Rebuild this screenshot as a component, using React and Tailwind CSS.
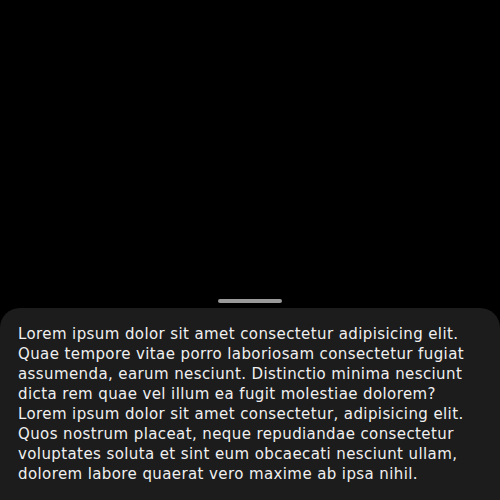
export default function App() {
  return (
    <div className="w-[500px] h-[500px] bg-black flex flex-col justify-end overflow-hidden">
      <div className="flex justify-center pb-[5px]">
        <div className="w-16 h-1 rounded-full bg-[#9a9a9a]" />
      </div>
      <div className="bg-[#1c1c1c] rounded-t-[20px] px-[18px] pt-4 pb-4">
        <p
          className="text-[15px] leading-5 tracking-[0.4px] text-[#f0f0f0]"
          style={{ fontFamily: '"DejaVu Sans", sans-serif' }}
        >
          Lorem ipsum dolor sit amet consectetur adipisicing elit. Quae tempore vitae porro laboriosam
          consectetur fugiat assumenda, earum nesciunt. Distinctio minima nesciunt dicta rem quae vel
          illum ea fugit molestiae dolorem? Lorem ipsum dolor sit amet consectetur, adipisicing elit.
          Quos nostrum placeat, neque repudiandae consectetur voluptates soluta et sint eum obcaecati
          nesciunt ullam, dolorem labore quaerat vero maxime ab ipsa nihil.
        </p>
      </div>
    </div>
  );
}
